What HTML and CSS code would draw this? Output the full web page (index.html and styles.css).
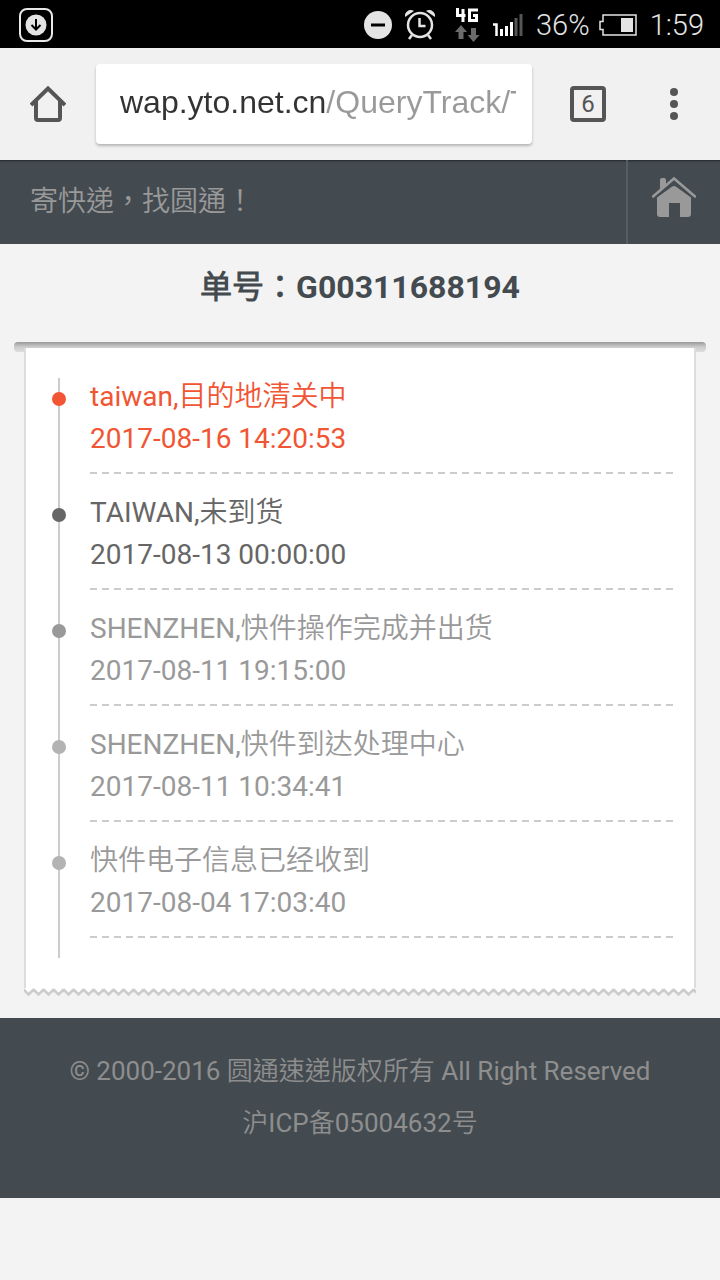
FILE: index.html
```
<!DOCTYPE html>
<html lang="zh-TW">
  <head>
    <meta charset="UTF-8" />
    <meta name="viewport" content="width=device-width, initial-scale=1.0" />
    <title>圆通速递</title>
    <link rel="stylesheet" href="styles.css">
  </head>
  <body>
    <div class="status-bar">
      <svg class="icon-download" width="34" height="34" viewBox="0 0 34 34">
        <rect x="1" y="1" width="32" height="32" rx="7" fill="none" stroke="#e8e8e8" stroke-width="2"/>
        <circle cx="17" cy="17" r="10.5" fill="#e4e4e4"/>
        <path d="M17 11v10M12.5 17l4.5 4.5 4.5-4.5" fill="none" stroke="#000" stroke-width="2"/>
      </svg>
      <div class="status-icons">
        <svg width="28" height="28" viewBox="0 0 28 28">
          <circle cx="14" cy="14" r="14" fill="#e4e4e4"/>
          <path d="M7 14h14" stroke="#000" stroke-width="3"/>
        </svg>
        <svg class="icon-alarm" width="30" height="32" viewBox="0 0 30 32">
          <path d="M0 8C-1 3 5-1 9 2zM30 8C31 3 25-1 21 2z" fill="#e4e4e4"/>
          <circle cx="15" cy="16" r="12" fill="none" stroke="#e4e4e4" stroke-width="2.5"/>
          <path d="M14.500 9v8h6M7 26l-3 4M23 26l3 4" fill="none" stroke="#e4e4e4" stroke-width="2.500"/>
        </svg>
        <svg width="26" height="34" viewBox="0 0 26 34">
          <path d="M3.500 0v7.500h8M9 1v13M24 2h-8.500v10.500h7v-5h-3.500" fill="none" stroke="#fff" stroke-width="3"/>
          <path d="M7 17l6 7H9.500v7h-5v-7H1zM19.500 34l-6-7H17v-7h5v7h3.500z" fill="#6b6b6b"/>
        </svg>
        <svg width="30" height="22" viewBox="0 0 30 22">
          <path d="M0 10.500h3.500V22" fill="none" stroke="#fff" stroke-width="2.500"/>
          <path d="M7 15h3v7H7zM12 12h3v10h-3zM17 8h3v14h-3z" fill="#fff"/>
          <path d="M21.500 4h3v18h-3zM26.500 0h3v22h-3z" fill="#555"/>
        </svg>
        <span class="battery-text">36%</span>
        <svg width="38" height="22" viewBox="0 0 38 22">
          <path d="M4 1h33v20H4v-5.500H1v-8h3z" fill="none" stroke="#e4e4e4" stroke-width="1.500"/>
          <rect x="22" y="4" width="12" height="14" fill="#e4e4e4"/>
        </svg>
        <span class="clock">1:59</span>
      </div>
    </div>

    <div class="toolbar">
      <button class="tool-btn" aria-label="Home">
        <svg width="36" height="36" viewBox="0 0 36 36">
          <path d="M1 19L18 2.500 35 19M6 15v17q0 2 2 2h20q2 0 2-2V15" fill="none" stroke="#555" stroke-width="4"/>
        </svg>
      </button>
      <div class="address">
        <input class="address-input" type="text" aria-label="Address" value="wap.yto.net.cn/QueryTrack/T">
      </div>
      <button class="tool-btn tabs-btn" aria-label="Tabs"><span class="tab-count">6</span></button>
      <button class="tool-btn menu-btn" aria-label="Menu">
        <svg width="8" height="32" viewBox="0 0 8 32">
          <g fill="#555"><circle cx="4" cy="4" r="4"/><circle cx="4" cy="16" r="4"/><circle cx="4" cy="28" r="4"/></g>
        </svg>
      </button>
    </div>

    <header class="site-header">
      <span class="slogan">寄快递，找圆通！</span>
      <a class="home-link" href="#" aria-label="首页">
        <svg width="44" height="42" viewBox="0 0 44 42">
          <path d="M1 20.500L22 2.500l21 18" fill="none" stroke="#999" stroke-width="2.500" stroke-linecap="round"/>
          <path d="M8 13V4q0-2 2-2h2q2 0 2 2v5z" fill="#999"/>
          <path d="M5 21.500L19.500 11q2.500-2 5 0L39 21.500V38q0 3-3 3h-8V27H17v14H8q-3 0-3-3z" fill="#999"/>
        </svg>
      </a>
    </header>

    <main>
      <h1>单号：G00311688194</h1>
      <div class="slot">
        <section class="card">
          <ul class="timeline">
            <li class="latest">
              <p>taiwan,目的地清关中</p>
              <time>2017-08-16 14:20:53</time>
            </li>
            <li class="recent">
              <p>TAIWAN,未到货</p>
              <time>2017-08-13 00:00:00</time>
            </li>
            <li class="past">
              <p>SHENZHEN,快件操作完成并出货</p>
              <time>2017-08-11 19:15:00</time>
            </li>
            <li>
              <p>SHENZHEN,快件到达处理中心</p>
              <time>2017-08-11 10:34:41</time>
            </li>
            <li>
              <p>快件电子信息已经收到</p>
              <time>2017-08-04 17:03:40</time>
            </li>
          </ul>
        </section>
        <!-- torn paper edge -->
        <svg class="torn-edge" width="100%" height="10">
          <defs>
            <pattern id="zigzag" width="10" height="10" patternUnits="userSpaceOnUse">
              <path d="M-1 0L0 1l4.500 4.500L9 1l2 2V0z" fill="#fff"/>
              <path d="M-1 1L0 2l4.500 4.500L9 2l2 2" fill="none" stroke="#ccc" stroke-width="2.600"/>
            </pattern>
          </defs>
          <rect width="100%" height="10" fill="url(#zigzag)"/>
        </svg>
      </div>
    </main>

    <footer>
      <p>© 2000-2016 圆通速递版权所有 All Right Reserved</p>
      <p>沪ICP备05004632号</p>
    </footer>
  </body>
</html>
```
FILE: styles.css
```
* {
  box-sizing: border-box;
}

body {
  margin: 0;
  background: #f3f3f3;
  font-family: Roboto, "Noto Sans CJK TC DemiLight", "Noto Sans CJK TC", sans-serif;
}

p,
ul,
h1 {
  margin: 0;
  padding: 0;
}

button {
  border: none;
  background: none;
  padding: 0;
}

svg {
  display: block;
}

.status-bar {
  display: flex;
  align-items: center;
  justify-content: space-between;
  height: 48px;
  padding: 2px 16px 0 19px;
  background: #000;
  color: #e4e4e4;
}

.status-icons {
  display: flex;
  align-items: center;
  gap: 13px;
}

.icon-alarm {
  margin-right: 6px;
}

.battery-text,
.clock {
  font-size: 29px;
  font-weight: 300;
}

.battery-text {
  margin-right: -4px;
}

.toolbar {
  display: flex;
  align-items: center;
  height: 112px;
  background: #f1f1f1;
}

.tool-btn {
  display: flex;
  align-items: center;
  justify-content: center;
  width: 96px;
  height: 96px;
}

.address {
  flex: 1;
  height: 80px;
  padding: 0 16px 0 24px;
  background: #fff;
  border-radius: 4px;
  box-shadow: 0 2px 3px rgba(0, 0, 0, 0.25);
}

/* host part is dark, path is grey */
.address-input {
  display: block;
  width: 100%;
  height: 76px;
  border: none;
  padding: 0;
  outline: none;
  font-family: "Liberation Sans", sans-serif;
  font-size: 32px;
  color: transparent;
  background: linear-gradient(90deg, #333 206px, #999 206px);
  -webkit-background-clip: text;
  background-clip: text;
}

.tabs-btn {
  width: 112px;
}

.tab-count {
  width: 36px;
  height: 36px;
  border: 4px solid #555;
  border-radius: 4px;
  color: #555;
  font: 400 24px/28px Roboto, sans-serif;
}

.menu-btn {
  width: 60px;
  margin-right: 16px;
}

.site-header {
  display: flex;
  height: 84px;
  background: #434b50;
  box-shadow: inset 0 3px 3px -3px #000;
  color: #999;
}

.slogan {
  flex: 1;
  padding-left: 30px;
  font-size: 28px;
  font-weight: 350;
  line-height: 84px;
}

.home-link {
  display: flex;
  justify-content: center;
  width: 94px;
  padding-top: 16px;
  border-left: 2px solid #525e62;
}

h1 {
  padding: 22px 0 34px;
  text-align: center;
  color: #434b50;
  font-size: 32px;
  line-height: 42px;
}

/* grey slot the paper comes out of */
.slot {
  position: relative;
  margin: 0 14px;
  padding: 6px 10px 0;
}

.slot::before {
  content: "";
  position: absolute;
  top: 0;
  left: 0;
  right: 0;
  height: 10px;
  border-radius: 4px;
  background: linear-gradient(#999, #ccc 50%, #ddd);
}

.card {
  position: relative;
  padding: 28px 20px 30px 32px;
  background: #fff;
  border: solid #ddd;
  border-width: 0 2px;
}

.timeline {
  position: relative;
  list-style: none;
  padding: 0 0 2px 32px;
}

.timeline::before {
  content: "";
  position: absolute;
  top: 2px;
  bottom: 0;
  left: 0;
  width: 2px;
  background: #ccc;
}

.timeline li {
  position: relative;
  height: 116px;
  color: #999;
  font-size: 28px;
  font-weight: 400;
  line-height: 42px;
}

.timeline li::before {
  content: "";
  position: absolute;
  top: 16px;
  left: -38px;
  width: 14px;
  height: 14px;
  border-radius: 50%;
  background: #b3b3b3;
}

.timeline li::after {
  content: "";
  display: block;
  height: 2px;
  margin-top: 12px;
  background: repeating-linear-gradient(90deg, #ccc 0 7px, transparent 7px 12px);
}

.timeline time {
  display: block;
}

.timeline .latest {
  color: #f15533;
}

.timeline .latest::before {
  background: #f15533;
}

.timeline .recent {
  color: #666;
}

.timeline .recent::before {
  background: #666;
}

.timeline .past::before {
  background: #999;
}

footer {
  margin-top: 20px;
  padding: 27px 0 49px;
  background: #434b50;
  color: #8e8e8e;
  text-align: center;
  font-size: 26px;
  font-weight: 400;
  line-height: 52px;
}
```
